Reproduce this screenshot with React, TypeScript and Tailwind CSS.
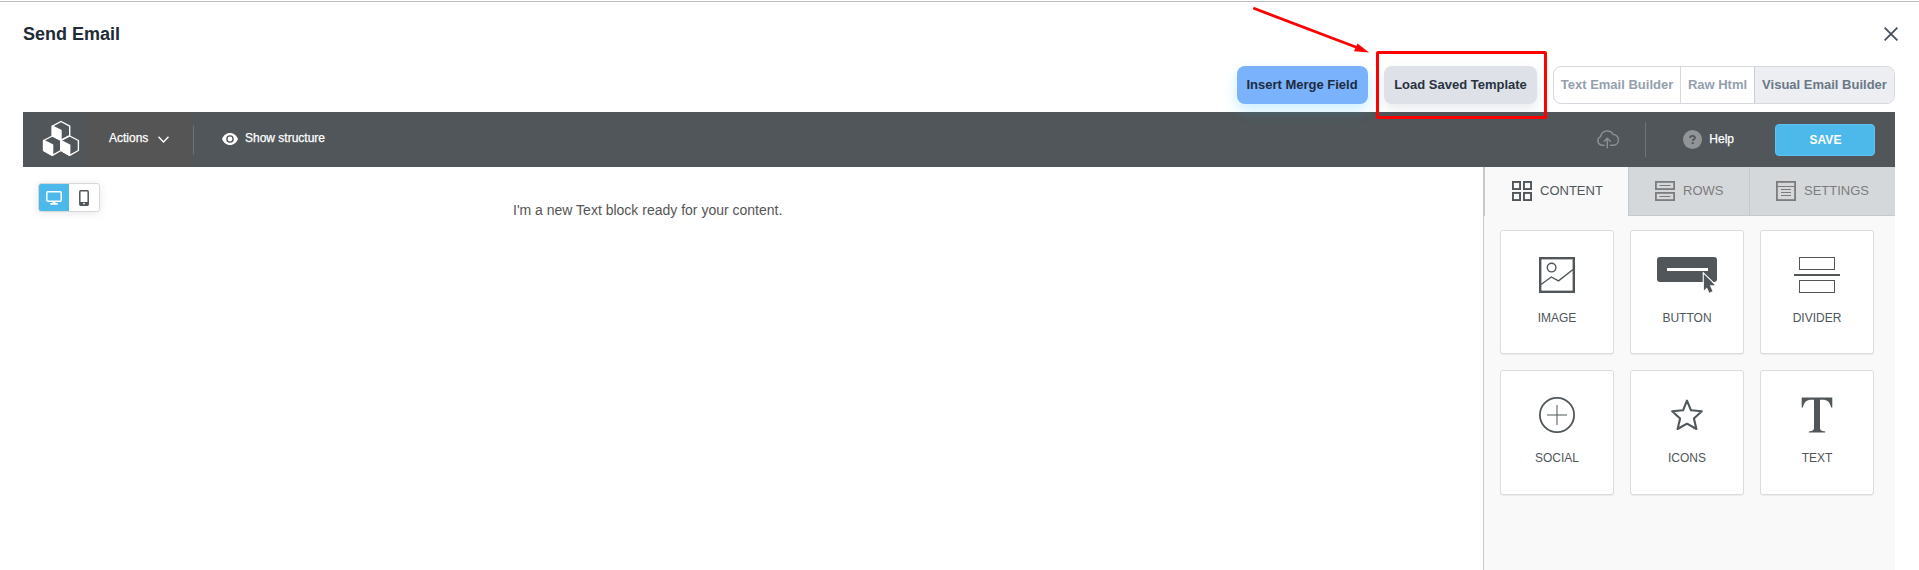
import React from "react";

const ink = "#505659";

function Logo() {
  return (
    <svg width="38" height="37" viewBox="0 0 38 37" fill="none" stroke="#fff" strokeWidth="1.4" strokeLinejoin="round">
      <path d="M19 1.5 27.7 6.2V15.5L19 20 10.3 15.5V6.2Z" />
      <path d="M10.3 16 19 20.5V30.5L10.3 35.3 1.6 30.5V20.5Z" />
      <path d="M27.7 16 36.4 20.5V30.5L27.7 35.3 19 30.5V20.5Z" />
      <path d="M10.3 6.2 19 10.5V20L10.3 15.5Z" fill="#fff" />
      <path d="M1.6 20.5 10.6 25V35.3L1.6 30.5Z" fill="#fff" />
      <path d="M19 20.5 27.7 25V35.3L19 30.5Z" fill="#fff" />
    </svg>
  );
}

function CloudIcon() {
  return (
    <svg width="24" height="19" viewBox="0 0 24 19" fill="none" stroke="#8b8f91" strokeWidth="1.5" strokeLinecap="round" strokeLinejoin="round">
      <path d="M8 15.3H5.5A4.6 4.6 0 0 1 4.6 6.6 6.8 6.8 0 0 1 17.3 4.6 5.4 5.4 0 0 1 18 15.3H14.5" />
      <path d="M11.3 17.8V8.5M8.3 11.3 11.3 8.3 14.3 11.3" />
    </svg>
  );
}

function ContentIcon() {
  return (
    <svg width="20" height="20" viewBox="0 0 20 20" fill="none" stroke={ink} strokeWidth="1.9">
      <rect x="0.95" y="0.95" width="7.1" height="7.1" />
      <rect x="11.95" y="0.95" width="7.1" height="7.1" />
      <rect x="0.95" y="11.95" width="7.1" height="7.1" />
      <rect x="11.95" y="11.95" width="7.1" height="7.1" />
    </svg>
  );
}

function RowsIcon() {
  return (
    <svg width="20" height="20" viewBox="0 0 20 20" fill="none" stroke="#7c7c7c" strokeWidth="1.8">
      <rect x="0.9" y="0.9" width="18.2" height="7.2" />
      <rect x="0.9" y="11.9" width="18.2" height="7.2" />
      <path d="M4.5 4.5H15.5M4.5 15.5H15.5" strokeWidth="1.1" />
    </svg>
  );
}

function SettingsIcon() {
  return (
    <svg width="20" height="20" viewBox="0 0 20 20" fill="none" stroke="#7c7c7c" strokeWidth="1.8">
      <rect x="0.9" y="0.9" width="18.2" height="18.2" />
      <path d="M1 5.5H19M5 8.5H15M5 11.5H15M5 14.5H15" strokeWidth="1" />
    </svg>
  );
}

function ImageIcon() {
  return (
    <svg width="36" height="36" viewBox="0 0 36 36" fill="none" stroke={ink}>
      <rect x="1.2" y="1.2" width="33.6" height="33.6" strokeWidth="2.4" />
      <circle cx="12.6" cy="10.6" r="4.3" strokeWidth="1.4" />
      <path d="M2 27.5 12.3 20 19.5 23.8 34 12.5" strokeWidth="1.4" />
    </svg>
  );
}

function ButtonIcon() {
  return (
    <svg width="60" height="36" viewBox="0 0 60 36">
      <rect width="60" height="25" rx="3" fill={ink} />
      <rect x="10" y="11" width="41" height="3" fill="#fff" />
      <path d="M46.3 25V16L60 29" fill="none" stroke="#fff" strokeWidth="1.2" />
      <path d="M46.9 17.3 58 28.3H52.8L55.5 34.2 52.4 35.7 49.9 30.6 46.9 33.4Z" fill={ink} />
    </svg>
  );
}

function DividerIcon() {
  return (
    <svg width="46" height="36" viewBox="0 0 46 36" fill="none" stroke={ink}>
      <rect x="5.5" y="0.5" width="35" height="12" />
      <rect x="5.5" y="23.5" width="35" height="12" />
      <path d="M0 18H46" strokeWidth="2" />
    </svg>
  );
}

function SocialIcon() {
  return (
    <svg width="36" height="36" viewBox="0 0 36 36" fill="none" stroke={ink}>
      <circle cx="18" cy="18" r="17.1" strokeWidth="1.8" />
      <path d="M8 18H28M18 8V28" strokeWidth="1" />
    </svg>
  );
}

function StarIcon() {
  return (
    <svg width="36" height="36" viewBox="0 0 36 36" fill="none" stroke={ink} strokeWidth="2.1" strokeLinejoin="round">
      <path d="M18 3.6 22 13.3 32.8 14.2 24.9 21.5 27.4 32 18 26.7 8.6 32 11.1 21.5 3.2 14.2 14 13.3Z" />
    </svg>
  );
}

function TextIcon() {
  return (
    <svg width="32" height="36" viewBox="0 0 32 36" fill={ink}>
      <path d="M0.7 0.5H31.3V10.5H30.1C28.8 5 26.500 2.800 21.500 2.800H19V30.500C19 33.200 20 34 24.200 34.400V35.600H7.800V34.400C12 34 13 33.200 13 30.500V2.800H10.500C5.500 2.800 3.200 5 1.900 10.500H0.700Z" />
    </svg>
  );
}

const tiles = [
  { label: "IMAGE", icon: <ImageIcon /> },
  { label: "BUTTON", icon: <ButtonIcon /> },
  { label: "DIVIDER", icon: <DividerIcon /> },
  { label: "SOCIAL", icon: <SocialIcon /> },
  { label: "ICONS", icon: <StarIcon /> },
  { label: "TEXT", icon: <TextIcon /> },
];

function Header() {
  return (
    <header className="flex h-[64px] items-start justify-between pr-[21px] pl-[23px]">
      <h1 className="pt-[18px] text-[18px] leading-[28px] font-bold text-[#212b38]">Send Email</h1>
      <button className="mt-[25px]" aria-label="Close">
        <svg width="14" height="14" viewBox="0 0 14 14" fill="none" stroke="#46505c" strokeWidth="1.8">
          <path d="M0.6 0.6 13.4 13.4M13.4 0.6 0.6 13.4" />
        </svg>
      </button>
    </header>
  );
}

function ModeBar() {
  return (
    <div className="flex h-[38px] justify-end pr-6 text-[13px] font-bold whitespace-nowrap">
      <button className="relative z-10 mr-4 w-[131px] rounded-lg bg-[#7ab3fb] pr-px text-[#1d2b40] shadow-[0_6px_14px_rgba(60,195,255,0.28)]">
        Insert Merge Field
      </button>
      <button className="relative mr-4 w-[153px] rounded-lg bg-[#dee1e7] text-[#28323f] shadow-[0_5px_12px_rgba(100,110,140,0.14)]">
        Load Saved Template
      </button>
      <div className="flex w-[342px] overflow-hidden rounded-lg border border-[#d5d9df] text-[#94a0ae]">
        <button className="w-[127px] border-r border-[#d5d9df]">Text Email Builder</button>
        <button className="w-[74px] border-r border-[#c9ced6]">Raw Html</button>
        <button className="flex-1 bg-[#edeef1] text-[#6a7888]">Visual Email Builder</button>
      </div>
    </div>
  );
}

function Toolbar() {
  return (
    <div className="flex h-[55px] items-center bg-[#505659] text-[12px] text-white [-webkit-text-stroke:0.25px_white]">
      <div className="flex w-[62px] pb-[2px] pl-[19px]">
        <Logo />
      </div>
      <button className="flex h-full w-[108px] items-center bg-[#555555] pb-[3px] pl-[24px]">
        Actions
        <svg className="mt-[3px] ml-[10px]" width="11" height="7" viewBox="0 0 11 7" fill="none" stroke="#fff" strokeWidth="1.4">
          <path d="M0.5 0.7 5.5 5.9 10.5 0.7" />
        </svg>
      </button>
      <div className="h-7 w-px bg-[#6f7375]" />
      <button className="flex items-center pb-[3px] pl-[28px]">
        <svg className="mt-[2px] mr-[7px]" width="16" height="12" viewBox="0 0 16 12">
          <path d="M8 0C4.2 0 1.3 2.6 0 6 1.3 9.4 4.2 12 8 12S14.7 9.4 16 6C14.7 2.6 11.8 0 8 0Z" fill="#fff" />
          <circle cx="8" cy="6" r="3.1" fill="none" stroke={ink} strokeWidth="1.4" />
        </svg>
        Show structure
      </button>
      <div className="ml-auto flex items-center">
        <CloudIcon />
        <div className="ml-[25px] h-[35px] w-px bg-[#6f7375]" />
        <button className="ml-[37px] flex items-center">
          <svg width="19" height="19" viewBox="0 0 19 19">
            <circle cx="9.5" cy="9.5" r="9.5" fill="#919597" />
            <path d="M7.1 7.9C7.1 5.2 11.9 5.2 11.9 7.7 11.9 9.4 9.7 9.2 9.7 11" fill="none" stroke={ink} strokeWidth="1.8" />
            <rect x="8.7" y="12.1" width="2" height="1.9" fill={ink} />
          </svg>
          <span className="ml-[7px] pb-[2px]">Help</span>
        </button>
        <button className="mr-5 ml-[41px] h-8 w-[100px] rounded-[4px] border border-[#62c2f0] bg-[#4cb9ea] pl-px font-bold [-webkit-text-stroke:0]">
          SAVE
        </button>
      </div>
    </div>
  );
}

function Canvas() {
  return (
    <main className="flex w-[1460px] items-start pt-4 pl-[15px]">
      <div className="flex h-[29px] w-[62px] overflow-hidden rounded-[3px] border border-[#d8d8d8] shadow-[0_1px_8px_rgba(0,0,0,0.1)]">
        <button className="flex w-[30px] items-center justify-center bg-[#4cb9ea]" aria-label="Desktop">
          <svg width="16" height="14" viewBox="0 0 16 14">
            <rect x="0.8" y="0.8" width="14.4" height="9.5" rx="1" fill="none" stroke="#fff" strokeWidth="1.5" />
            <path d="M6.5 10.5H9.5V12H11.8V13.7H4.2V12H6.5Z" fill="#fff" />
          </svg>
        </button>
        <button className="flex flex-1 items-center justify-center" aria-label="Mobile">
          <svg width="10" height="16" viewBox="0 0 10 16">
            <rect x="0.8" y="0.8" width="8.4" height="14.4" rx="1" fill="none" stroke={ink} strokeWidth="1.5" />
            <rect x="1" y="12" width="8" height="3.5" fill={ink} />
            <circle cx="5" cy="13.6" r="0.9" fill="#fff" />
          </svg>
        </button>
      </div>
      <p className="ml-[413px] pt-[17px] text-[14px] leading-[21px] text-[#555555]">I'm a new Text block ready for your content.</p>
    </main>
  );
}

function Sidebar() {
  return (
    <aside className="flex-1 border-l border-[#c7c9cb] bg-[#f9f9f9]">
      <div className="flex h-[49px] text-[13px] text-[#7c7c7c]">
        <button className="flex w-[144px] items-center gap-[8px] border-l border-[#c7c9cb] pb-px pl-[27px] text-[#505659]">
          <ContentIcon />
          <span>CONTENT</span>
        </button>
        <button className="flex w-[121px] items-center gap-[8px] border-b border-l border-[#c5c9cc] bg-[#d5d8db] pl-[26px]">
          <RowsIcon />
          <span>ROWS</span>
        </button>
        <button className="flex flex-1 items-center gap-[8px] border-b border-l border-[#c5c9cc] bg-[#d5d8db] pl-[26px]">
          <SettingsIcon />
          <span>SETTINGS</span>
        </button>
      </div>
      <div className="grid grid-cols-[114px_114px_114px] grid-rows-[124px_125px] gap-4 pt-[14px] pl-4">
        {tiles.map((t) => (
          <div
            key={t.label}
            className="flex flex-col items-center rounded-[3px] border border-[#dcdcdc] bg-white pt-[26px] text-[12px] text-[#505659] shadow-[0_1px_1px_rgba(0,0,0,0.06)]"
          >
            <div className="flex h-9 items-center">{t.icon}</div>
            <span className="pt-[17px] leading-4">{t.label}</span>
          </div>
        ))}
      </div>
    </aside>
  );
}

export default function App() {
  return (
    <div className="relative flex h-[570px] w-[1919px] flex-col overflow-hidden bg-white pt-px font-['Liberation_Sans',Arial,sans-serif]">
      <div className="h-px bg-[#bdbdbd]" />
      <Header />
      <ModeBar />
      <section className="mt-2 mr-6 ml-[23px] flex flex-1 flex-col">
        <Toolbar />
        <div className="flex flex-1">
          <Canvas />
          <Sidebar />
        </div>
      </section>
      <svg className="pointer-events-none absolute top-0 left-[1250px] z-20" width="300" height="124" viewBox="1250 0 300 124">
        <rect x="1377.5" y="52.5" width="168" height="65" rx="0.5" fill="none" stroke="#fe0000" strokeWidth="3" />
        <path d="M1254.5 8.5 1357 47.5" stroke="#fe0000" strokeWidth="2.8" strokeLinecap="round" />
        <path d="M1369 52.5 1357.5 43.5 1354 51.3Z" fill="#fe0000" />
      </svg>
    </div>
  );
}
